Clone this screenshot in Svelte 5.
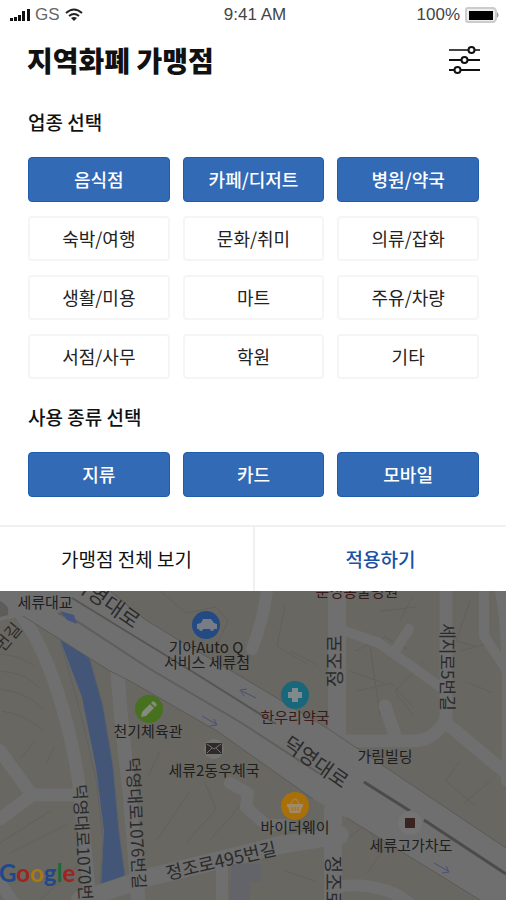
<script lang="ts">
  let categories = $state([
    { name: '음식점', selected: true },
    { name: '카페/디저트', selected: true },
    { name: '병원/약국', selected: true },
    { name: '숙박/여행', selected: false },
    { name: '문화/취미', selected: false },
    { name: '의류/잡화', selected: false },
    { name: '생활/미용', selected: false },
    { name: '마트', selected: false },
    { name: '주유/차량', selected: false },
    { name: '서점/사무', selected: false },
    { name: '학원', selected: false },
    { name: '기타', selected: false },
  ]);

  let payTypes = $state([
    { name: '지류', selected: true },
    { name: '카드', selected: true },
    { name: '모바일', selected: true },
  ]);

  const places = [
    { name: '세류대교', x: 45, y: 17 },
    { name: '기아Auto Q', x: 206, y: 62 },
    { name: '서비스 세류점', x: 207, y: 77 },
    { name: '천기체육관', x: 148, y: 146 },
    { name: '세류2동우체국', x: 214, y: 185 },
    { name: '가림빌딩', x: 385, y: 171 },
    { name: '바이더웨이', x: 295, y: 242 },
    { name: '세류고가차도', x: 411, y: 260 },
  ];

  const streets = [
    { name: '덕영대로', x: 106, y: 10, angle: 35, size: 21 },
    { name: '덕영대로', x: 316, y: 171, angle: 35, size: 20 },
    { name: '정조로', x: 335, y: 70, angle: -90, size: 19 },
    { name: '정조로', x: 333, y: 291, angle: 90, size: 19 },
    { name: '세지로5번길', x: 447, y: 76, angle: 90, size: 17 },
    { name: '덕영대로1076번길', x: 136, y: 232, angle: 87, size: 17 },
    { name: '덕영대로1070번길', x: 83, y: 259, angle: 87, size: 17 },
    { name: '정조로495번길', x: 221, y: 270, angle: -13, size: 18 },
    { name: '번길', x: 8, y: 46, angle: -50, size: 17 },
  ];
</script>

<div class="page">
  <div class="panel">
    <div class="status">
      <div class="status-left">
        <svg width="20" height="14" viewBox="0 0 20 14" aria-hidden="true">
          <path d="M0 10h3v3H0zM4 9h3v4H4zM8 7h3v6H8zM12 3h3v10h-3zM17 1h3v12h-3z" fill="#111" />
        </svg>
        <span>GS</span>
        <svg width="18" height="14" viewBox="0 0 18 14" aria-hidden="true">
          <path d="M1 5Q9-2 17 5M4 8q5-4 10 0" fill="none" stroke="#222" stroke-width="2" />
          <path d="M6 10q3-2 6 0l-3 3z" fill="#222" />
        </svg>
      </div>
      <time>9:41 AM</time>
      <div class="status-right">
        <span>100%</span>
        <svg width="35" height="16" viewBox="0 0 35 16" aria-hidden="true">
          <path d="M3 1h25q2 0 3 3v8q-1 3-3 3H3q-2 0-2-2V3q0-2 2-2z" fill="#eee" stroke="#ccc" stroke-width="2" />
          <path d="M4 4h24v9H4z" fill="#000" />
          <path d="M32 5q3 3 0 6z" fill="#999" />
        </svg>
      </div>
    </div>

    <header>
      <h1>지역화폐 가맹점</h1>
      <button class="filter" aria-label="필터">
        <svg width="32" height="28" viewBox="0 0 32 28" fill="none" stroke="#111" stroke-width="2">
          <path d="M0 4h19M26 4h5" stroke="#444" />
          <path d="M0 14h12M19 14h12M0 24h5M12 24h19" />
          <circle cx="22.5" cy="4" r="3" />
          <circle cx="15.5" cy="14" r="3" />
          <circle cx="8.5" cy="24" r="3" />
        </svg>
      </button>
    </header>

    <section>
      <h2>업종 선택</h2>
      <div class="chips">
        {#each categories as item}
          <button
            class="chip"
            class:selected={item.selected}
            aria-pressed={item.selected}
            onclick={() => (item.selected = !item.selected)}
          >{item.name}</button>
        {/each}
      </div>
    </section>

    <section>
      <h2>사용 종류 선택</h2>
      <div class="chips">
        {#each payTypes as item}
          <button
            class="chip"
            class:selected={item.selected}
            aria-pressed={item.selected}
            onclick={() => (item.selected = !item.selected)}
          >{item.name}</button>
        {/each}
      </div>
    </section>

    <div class="actions">
      <button>가맹점 전체 보기</button>
      <button class="apply">적용하기</button>
    </div>
  </div>

  <div class="map">
    <svg viewBox="0 0 506 309" role="img" aria-label="지도">
      <!-- blocks -->
      <g fill="none" stroke="#62605c" stroke-width="1">
        <path d="M0 63q22 2 34 12M0 80q28 2 40 18M0 98q30 4 44 22M2 120q24 4 42 20M35 150l-15 18M55 155l-10 20M0 252l50-32M10 262l56-28M40 309l44-40M160 160l-12 26M190 200l-34 50M204 190l12 28-30 34M240 215l-30 34" />
        <path d="M160 0l26 22 30-6 12 14-12 26M285 15l-8 40 30 18M262 30l-14 40M290 60l28 14M355 60l30-14 22 12M350 80l34 12M357 100l34-8 22 24M400 30l12-24M425 70l-30 30 18 24M470 10l-14 40 22 6M460 60l30-8M465 90l28 12M370 55l10 70M460 170l-14 20 28 24M490 190l-26 22M380 20l36-4M345 250l20-16 18 26-16 22M285 280l30 10" />
      </g>

      <!-- river -->
      <path d="M60 48l29 17 14 50 10 60 6 65 6 44-24 13 3-57-8-64-14-70z" fill="#435678" />
      <path d="M60 48l22 80 14 60 7 60-3 52M89 65l14 50 10 60 6 65 6 44" fill="none" stroke="#5d6268" />

      <!-- side streets -->
      <g fill="none" stroke="#6f6f6f" stroke-linejoin="round" stroke-linecap="round">
        <path d="M20 22q22 30 38 80t22 100l10 107" stroke-width="13" />
        <path d="M117 76q4 60 12 120l10 120" stroke-width="14" />
        <path d="M0 160l32 44h44M32 204L0 228" stroke-width="13" />
        <path d="M80 309l70-23 130-32 60-10" stroke-width="18" />
        <path d="M267 0q-4 30-15 58" stroke-width="12" />
        <path d="M337 0v150M333 218v100" stroke-width="18" />
        <path d="M345 40l34 12 28 20 36 26M395 60l14-22" stroke-width="10" />
        <path d="M446 0v132l60 50" stroke-width="13" />
        <path d="M345 150h68q20 0 32-20M385 115l12 35" stroke-width="13" />
        <path d="M484 0v45l30 45M500 0q10 50 6 190" stroke-width="10" />
        <path d="M230 192l18 10-2 14 20 18h20" stroke-width="12" />
        <path d="M222 275v40M340 295q50-4 74 22M0 292l18 26" stroke-width="12" />
      </g>
      <path d="M232 273h30v18h-12v18h-20z" fill="#62646a" />

      <!-- main road -->
      <path d="M0 0h110l33 27 37 23 60 35 87 52 179 120v52h-26l-133-82-34-19-96-68-87-50-20-10-87-55L0 30z" fill="#6f6f6f" />
      <path d="M110 0l33 27 37 23 60 35 87 52 179 120M23 25l87 55 20 10 87 50 96 68M347 227l133 82" fill="none" stroke="#5b5a58" stroke-width="1" />
      <path d="M72 7l49 30 72 44 83 52" fill="none" stroke="#565553" stroke-width="2" />
      <path d="M58 22l20 9 72 47 90 53 80 52" fill="none" stroke="#5f5e5b" stroke-width="2" />
      <path d="M364 191l46 29M424 229l82 54" fill="none" stroke="#4c4b49" stroke-width="3" />
      <path d="M0 10q10 4 8 14l-8 2z" fill="#5e5c58" />
      <path d="M60 20l14 4 3 9-10-4z" fill="#45557d" />
      <g fill="none" stroke="#4a5073" stroke-width="1">
        <path d="M256 107l-14-7M247 98l-7 1 4 6M202 125l14 8M214 128l3 6-7 1M434 272l14 8M446 275l3 6-7 1" />
      </g>

      <g class="streets">
        {#each streets as street}
          <text
            transform="translate({street.x} {street.y}) rotate({street.angle})"
            dy="0.36em"
            font-size={street.size}
          >{street.name}</text>
        {/each}
      </g>

      <g class="places">
        <text class="clinic" x="357" y="6">문정동물병원</text>
        <text class="clinic" x="295" y="132">한우리약국</text>
        {#each places as place}
          <text x={place.x} y={place.y}>{place.name}</text>
        {/each}
      </g>

      <!-- car -->
      <circle cx="206" cy="34" r="14" fill="#234a82" />
      <path d="M197 33l4-1 2-4h8l3 4 3 1v5h-3a2 2 0 0 1-4 0h-7a2 2 0 0 1-4 0h-2z" fill="#777d86" />
      <!-- pencil -->
      <circle cx="149" cy="118" r="14" fill="#47701f" />
      <path d="M142 121l8-8 4 4-8 8-5 1zM151 112l2-2q3 1 4 4l-2 2z" fill="#858b7e" />
      <!-- pharmacy -->
      <circle cx="295" cy="104" r="14" fill="#19677a" />
      <path d="M292 97h6v4h4v6h-4v4h-6v-4h-4v-6h4z" fill="#808a8c" />
      <!-- basket -->
      <circle cx="295" cy="215" r="14" fill="#a96f08" />
      <path d="M287 213h16v3h-1l-2 6h-10l-2-6h-1z" fill="#a18b67" />
      <path d="M290 214l4-6h2l4 6" fill="none" stroke="#a18b67" stroke-width="1" />
      <path d="M292 216v4M295 216v4M298 216v4" stroke="#a96f08" />
      <!-- post office -->
      <circle cx="214" cy="158" r="10" fill="#737373" />
      <path d="M206 152h16v11h-16z" fill="#302928" />
      <path d="M207 153l7 5 7-5M207 162l5-5M221 162l-5-5" fill="none" stroke="#737373" />
      <!-- overpass -->
      <circle cx="410" cy="232" r="12" fill="#747474" />
      <path d="M405 227h10v10h-10z" fill="#3a2422" />

      <text class="google" x="-1" y="291"
        ><tspan fill="#21488c">G</tspan><tspan fill="#9b2620">o</tspan><tspan fill="#a87b0b">o</tspan><tspan fill="#21488c">g</tspan><tspan fill="#1c6b34">l</tspan><tspan fill="#9b2620">e</tspan></text>
    </svg>
  </div>
</div>

<style>
  :global(body) {
    margin: 0;
    background: #696762;
  }

  .page {
    font-family: 'Noto Sans CJK KR', sans-serif;
    color: #111;
  }

  .panel {
    background: #fff;
  }

  button {
    font-family: inherit;
    color: inherit;
    margin: 0;
    padding: 0 0 2px;
    border: 0;
    background: none;
    cursor: pointer;
  }

  .status {
    display: grid;
    grid-template-columns: 1fr auto 1fr;
    align-items: center;
    height: 30px;
    padding: 0 6px 0 10px;
    font-family: 'Liberation Sans', sans-serif;
    font-size: 17px;
    color: #444;
  }

  .status-left,
  .status-right {
    display: flex;
    align-items: center;
    gap: 5px;
  }

  .status-left {
    color: #666;
  }

  .status-right {
    justify-content: flex-end;
  }

  header {
    display: flex;
    align-items: center;
    justify-content: space-between;
    padding: 14px 25px 0 27px;
  }

  h1 {
    margin: 0;
    font-size: 28px;
    font-weight: 900;
    line-height: 32px;
  }

  .filter {
    padding: 0;
  }

  .filter svg {
    display: block;
  }

  section {
    padding: 24px 27px 0 28px;
  }

  header + section {
    padding-top: 32px;
  }

  h2 {
    margin: 0 0 21px;
    font-size: 19px;
    font-weight: 500;
    line-height: 28px;
  }

  .chips {
    display: grid;
    grid-template-columns: repeat(3, 1fr);
    gap: 14px 13px;
  }

  .chip {
    height: 45px;
    border: 2px solid #f5f5f5;
    border-radius: 4px;
    font-size: 18px;
    color: #222;
  }

  .chip.selected {
    border: 1px solid #1f5cab;
    background: #336ab5;
    color: #fff;
    font-weight: 500;
  }

  .actions {
    display: grid;
    grid-template-columns: 1fr 1fr;
    margin-top: 28px;
    border-top: 2px solid #f0f0f0;
  }

  .actions button {
    height: 64px;
    font-size: 19px;
  }

  .actions .apply {
    border-left: 2px solid #f0f0f0;
    color: #1c50a5;
    font-weight: 500;
  }

  .map svg {
    display: block;
    width: 100%;
    height: auto;
    background: #696762;
  }

  .streets text,
  .places text {
    text-anchor: middle;
    fill: #2b2b2b;
  }

  .places text {
    font-size: 15px;
    fill: #1e1e1e;
  }

  .places .clinic {
    fill: #381a1a;
  }

  .google {
    font-family: Lato, sans-serif;
    font-size: 24px;
    font-weight: 700;
  }
</style>
